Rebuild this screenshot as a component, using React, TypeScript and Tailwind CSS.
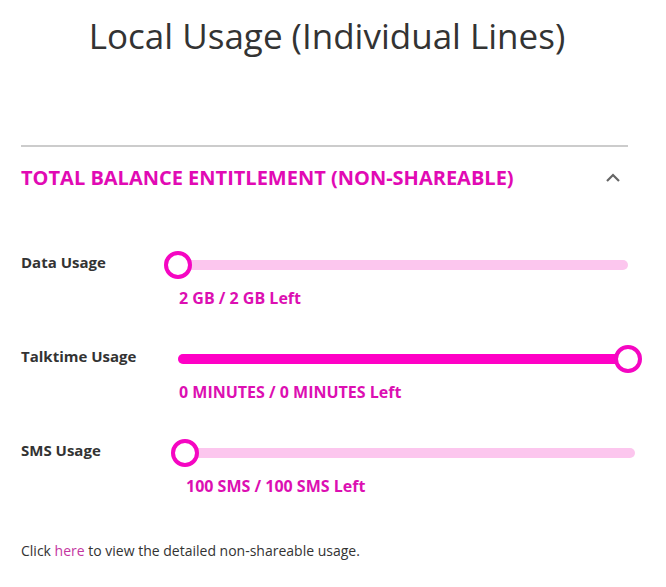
import React from "react";

type Usage = {
  label: string;
  value: string;
  pct: number;
  shift?: boolean;
};

const usages: Usage[] = [
  { label: "Data Usage", value: "2 GB / 2 GB Left", pct: 0 },
  { label: "Talktime Usage", value: "0 MINUTES / 0 MINUTES Left", pct: 100 },
  { label: "SMS Usage", value: "100 SMS / 100 SMS Left", pct: 0, shift: true },
];

const UsageRow = ({ item, first }: { item: Usage; first: boolean }) => {
  return (
    <div className={first ? "mt-[42px]" : "mt-[36px]"}>
      <div className="flex items-center h-[28px]">
        <div className="w-[157px] shrink-0 text-[15px] font-bold text-[#333] leading-[20px] -mt-[6px]">
          {item.label}
        </div>
        <div className={item.shift ? "flex-1 ml-[7px] -mr-[7px]" : "flex-1"}>
          <div className="relative h-[10px] rounded-full bg-[#fcc6ee]">
            <div
              className="absolute left-0 top-0 h-full rounded-full bg-[#ff00c6]"
              style={{ width: `${item.pct}%` }}
            />
            <div
              className="absolute top-1/2 -translate-y-1/2 w-[28px] h-[28px] rounded-full border-[4px] border-[#f506c2] bg-white"
              style={{ left: `calc(${item.pct}% - 14px)` }}
            />
          </div>
        </div>
      </div>
      <div
        className={
          "mt-[8px] text-[16px] font-bold leading-[22px] text-[#dc0fb2] " +
          (item.shift ? "pl-[165px]" : "pl-[158px]")
        }
      >
        {item.value}
      </div>
    </div>
  );
};

export default function App() {
  return (
    <div className="w-[666px] h-[587px] bg-white font-['Open_Sans',sans-serif]">
      <h1 className="pt-[12px] pr-[12px] text-center text-[35px] leading-[48px] text-[#333] font-normal">
        Local Usage (Individual Lines)
      </h1>

      <div className="ml-[21px] mr-[38px] mt-[85px]">
        <div className="border-t-2 border-[#cccccc]" />
        <div className="flex items-center justify-between h-[62px]">
          <div className="text-[20px] font-bold text-[#e10ab4] leading-[28px]">
            TOTAL BALANCE ENTITLEMENT (NON-SHAREABLE)
          </div>
          <svg width="16" height="10" viewBox="0 0 16 10" className="mr-[7px]">
            <polyline points="2,8 8,2 14,8" fill="none" stroke="#666" strokeWidth="2.2" />
          </svg>
        </div>

        {usages.map((u, i) => (
          <UsageRow key={u.label} item={u} first={i === 0} />
        ))}

        <p className="mt-[44px] text-[14px] leading-[20px] text-[#333]">
          Click <span className="text-[#c4369f]">here</span> to view the detailed non-shareable usage.
        </p>
      </div>
    </div>
  );
}
